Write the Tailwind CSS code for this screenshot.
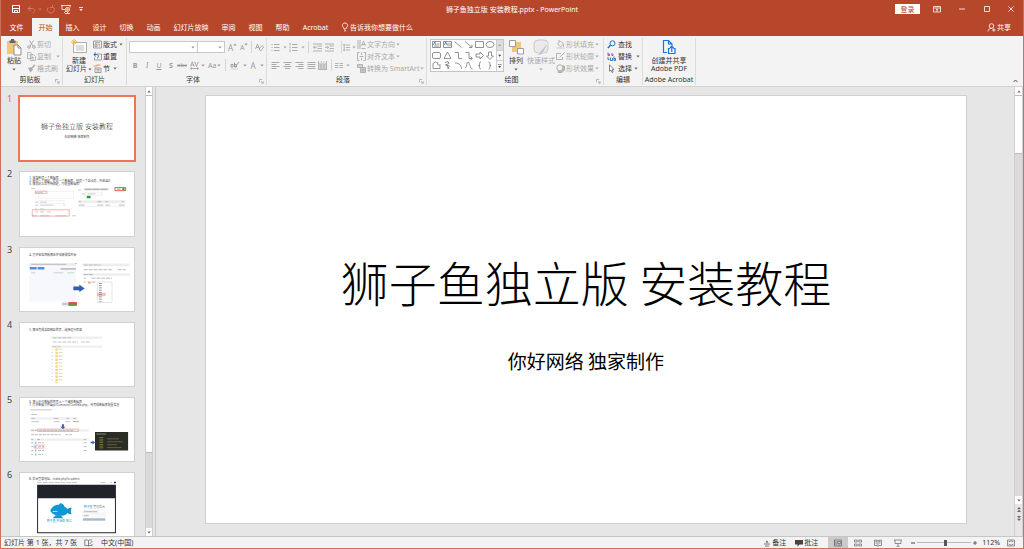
<!DOCTYPE html>
<html>
<head>
<meta charset="utf-8">
<title>狮子鱼独立版 安装教程.pptx - PowerPoint</title>
<script src="https://cdn.jsdelivr.net/npm/@tailwindcss/browser@4"></script>
</head>
<body class="h-screen overflow-hidden flex flex-col font-['Noto_Sans','Noto_Sans_CJK_SC',sans-serif] text-[7px] leading-[9px] text-[#333] bg-[#e6e6e6] border border-t-0 border-[#d0705c]">

<svg class="hidden">
  <symbol id="car" viewBox="0 0 4 3"><path d="M.3.5h3.4L2 2.5z" fill="currentColor"/></symbol>
  <symbol id="launch" viewBox="0 0 6 6"><path d="M.5 4V.5H4M2.500 2.500l2.500 2.500M5 2.800V5H2.800" fill="none" stroke="currentColor" stroke-width=".7"/></symbol>
</svg>

<header class="bg-[#b7472a] text-white shrink-0">
  <div class="h-[18px] grid grid-cols-[1fr_auto_1fr] items-center">
    <div class="flex items-center pl-[10px]">
      <button aria-label="保存" class="w-[10px]"><svg class="size-[10px] block" viewBox="0 0 10 10" fill="none" stroke="#fff"><path d="M1.500 1.500h7v7h-7z"/><path d="M1.500 4.500h7M3.500 8.500V6.500h3v2"/></svg></button>
      <button aria-label="撤消" class="ml-[6px] text-[#d07a64] flex items-center gap-[2px]"><svg class="size-[9px]" viewBox="0 0 9 9" fill="none" stroke="currentColor"><path d="M3.500 1 1 3.500 3.500 6M1 3.500h4.500c3 0 3 4 0 4.500"/></svg><svg class="w-1 h-[3px]"><use href="#car"/></svg></button>
      <button aria-label="恢复" class="ml-[4px] text-[#d07a64]"><svg class="size-[9px] block" viewBox="0 0 9 9" fill="none" stroke="currentColor"><path d="M6.500 1.500A3.500 3.500 0 1 1 2 2.500M6.500 0v2.500H4"/></svg></button>
      <button aria-label="从头开始" class="ml-[6px]"><svg class="size-[10px] block" viewBox="0 0 10 10" fill="none" stroke="#fff" stroke-width=".8"><path d="M0 1.500h10M1 1.500v4h3M9 1.500v2M3 9l2-2"/><circle cx="6.500" cy="5.500" r="2.100"/><path d="M6 4.500v2l1.500-1zM4 9.500h5M6.500 8v1.500"/></svg></button>
      <button aria-label="自定义快速访问工具栏" class="ml-[8px]"><svg class="w-1 h-[5px] block" viewBox="0 0 4 5"><path d="M0 .5h4" stroke="#fff" stroke-width=".8"/><path d="M.3 2h3.400L2 4z" fill="#fff"/></svg></button>
    </div>
    <h1>狮子鱼独立版 安装教程.pptx - PowerPoint</h1>
    <div class="flex items-center justify-end pr-[7px]">
      <button class="bg-white text-[#b7472a] w-[25px] h-[10px] mr-[12px]">登录</button>
      <button aria-label="功能区显示选项" class="w-[10px] mr-[15px]"><svg class="size-[10px] block" viewBox="0 0 10 10" fill="none" stroke="#fff" stroke-width=".8"><path d="M1.500 2.500h7v5.500h-7zM1.500 4h7M5 8V5M3.800 6 5 4.900 6.200 6"/></svg></button>
      <button aria-label="最小化" class="w-[10px] mr-[15px]"><svg class="size-[10px] block" viewBox="0 0 10 10"><path d="M2 5h6" stroke="#fff" stroke-width=".8"/></svg></button>
      <button aria-label="最大化" class="w-[10px] mr-[14px]"><svg class="size-[10px] block" viewBox="0 0 10 10"><path d="M2.500 2.500h5v5h-5z" fill="none" stroke="#fff" stroke-width=".8"/></svg></button>
      <button aria-label="关闭" class="w-[10px]"><svg class="size-[10px] block" viewBox="0 0 10 10"><path d="m2.500 2.500 5 5m0-5-5 5" stroke="#fff" stroke-width=".8"/></svg></button>
    </div>
  </div>
  <nav class="h-[18px] flex items-stretch">
    <button class="w-[31px]">文件</button>
    <button class="w-[27px] bg-[#f3f3f3] text-[#b7472a]">开始</button>
    <button class="w-[27px]">插入</button>
    <button class="w-[27px]">设计</button>
    <button class="w-[27px]">切换</button>
    <button class="w-[27px]">动画</button>
    <button class="w-[48px]">幻灯片放映</button>
    <button class="w-[27px]">审阅</button>
    <button class="w-[27px]">视图</button>
    <button class="w-[27px]">帮助</button>
    <button class="w-[39px]">Acrobat</button>
    <button class="ml-[6px] flex items-center gap-[1px]"><svg class="w-2 h-[10px]" viewBox="0 0 8 10" fill="none" stroke="#fff" stroke-width=".8"><path d="M3 7V6C.5 4.500 1 1 4 1s3.500 3.500 1 5v1zM3 8.800h2"/></svg>告诉我你想要做什么</button>
    <button class="ml-auto mr-3 flex items-center gap-[1px]"><svg class="size-[9px]" viewBox="0 0 9 9" fill="none" stroke="#fff" stroke-width=".8"><circle cx="4.500" cy="3" r="2.300"/><path d="M1 8.500C1 6.500 2.500 5.300 4.500 5.300M5 7h3.500M6.800 5.300v3.400"/></svg>共享</button>
  </nav>
</header>

<section aria-label="功能区" class="h-[51px] shrink-0 bg-[#f3f3f3] border-b border-[#d2d2d2] flex pt-[2px] pb-px">

  <div class="w-[62px] border-r border-[#dcdcdc] flex flex-col">
    <div class="h-9 flex pl-[5px]">
      <button class="w-[16px] flex flex-col items-center"><svg class="w-4 h-[18px]" viewBox="0 0 16 18"><path d="M1 3h11v13H1z" fill="#f0c878"/><path d="M3.500 2.500H5V1h3v1.500h1.500V5h-6z" fill="#666"/><path d="M8 7h4l3 3v7H8z" fill="#fff" stroke="#777" stroke-width=".8"/><path d="M12 7v3h3" fill="none" stroke="#777" stroke-width=".8"/></svg>粘贴<svg class="w-1 h-[3px] mt-[3px] text-[#666]"><use href="#car"/></svg></button>
      <div class="ml-[5px] text-[#aaa] flex flex-col">
        <button class="h-3 flex items-center gap-[1px]"><svg class="size-[9px]" viewBox="0 0 9 9" fill="none" stroke="currentColor"><path d="M2.500.5 6 6M6.500.5 3 6"/><circle cx="2" cy="7" r="1.300"/><circle cx="7" cy="7" r="1.300"/></svg>剪切</button>
        <button class="h-3 flex items-center gap-[1px]"><svg class="size-[9px]" viewBox="0 0 9 9" fill="#f3f3f3" stroke="currentColor" stroke-width=".8"><path d="M.5.5h3l1.500 1.500v4.500H.5zM3.500 2.500h3L8.500 4.500v4h-5zM5 5.500h2M5 7h2M1.800 3h1"/></svg>复制<svg class="w-1 h-[3px] ml-1"><use href="#car"/></svg></button>
        <button class="h-3 flex items-center gap-[1px]"><svg class="size-[9px]" viewBox="0 0 9 9"><path d="M1 4 4 3l2 2.500L3.500 8.500z" fill="currentColor"/><path d="M5 4 8 .8" stroke="currentColor" stroke-width="1.500"/></svg>格式刷</button>
      </div>
    </div>
    <div class="flex-1 flex items-center"><span class="flex-1 text-center pl-[4px]">剪贴板</span><svg class="size-[5px] mr-[2px] mt-1 text-[#888]"><use href="#launch"/></svg></div>
  </div>

  <div class="w-[64px] border-r border-[#dcdcdc] flex flex-col">
    <div class="h-9 flex pl-[3px]">
      <button class="w-[26px] flex flex-col items-center"><svg class="w-[18px] h-[18px] shrink-0" viewBox="0 0 18 18"><path d="M3.500 4.500h13v10h-13z" fill="#fff" stroke="#999" stroke-width=".8"/><path d="M6 8h8M6 10h8M6 12h8" stroke="#aaa" stroke-width=".8"/><path d="M4 1v6M1 4h6M2 2l4 4M6 2 2 6" stroke="#f0b94f" stroke-width=".9"/></svg><span>新建</span><span class="flex items-center gap-[1px] leading-[8px] whitespace-nowrap">幻灯片<svg class="w-1 h-[3px] text-[#666]"><use href="#car"/></svg></span></button>
      <div class="flex flex-col ml-px">
        <button class="h-3 flex items-center gap-[1px]"><svg class="size-[9px]" viewBox="0 0 9 9" fill="none" stroke="#888" stroke-width=".8"><path d="M.5 1h8v7h-8zM2 2.700h5M2 4h2v2.500H2zM5.500 4.500H7M5.500 6H7"/></svg>版式<svg class="w-1 h-[3px] ml-px text-[#666]"><use href="#car"/></svg></button>
        <button class="h-3 flex items-center gap-[1px]"><svg class="size-[9px]" viewBox="0 0 9 9" fill="none"><path d="M3.500 2h5v6h-7V5.500" stroke="#888" stroke-width=".8"/><path d="M3 .5.800 2.500 3 4.500M1 2.500h2.500C6 2.500 6 6 4 6" stroke="#2b6cb8"/></svg>重置</button>
        <button class="h-3 flex items-center gap-[1px]"><svg class="size-[9px]" viewBox="0 0 9 9" fill="none"><path d="M.5 2h3l1-1h3" stroke="#e8935f" stroke-width="1.200"/><path d="M2 4h6v4.500H2zM3.500 5.500h3M3.500 7h3" stroke="#888" stroke-width=".8"/></svg>节<svg class="w-1 h-[3px] ml-[2px] text-[#666]"><use href="#car"/></svg></button>
      </div>
    </div>
    <div class="flex-1 flex items-center justify-center">幻灯片</div>
  </div>

  <div class="w-[140px] border-r border-[#dcdcdc] flex flex-col text-[#999]">
    <div class="h-[18px] flex items-center pl-[2px]">
      <div class="relative w-[69px]"><select aria-label="字体" class="appearance-none block w-full h-3 bg-white border border-[#c8c8c8]"></select><svg class="absolute right-[3px] top-[5px] w-1 h-[3px]"><use href="#car"/></svg></div>
      <div class="relative w-[27px]"><select aria-label="字号" class="appearance-none block w-full h-3 bg-white border border-l-0 border-[#c8c8c8]"></select><svg class="absolute right-[3px] top-[5px] w-1 h-[3px]"><use href="#car"/></svg></div>
      <button class="ml-[3px] w-[9px] text-[8px] flex">A<svg class="w-1 h-[3px]" viewBox="0 0 4 3"><path d="M.3 2.500h3.400L2 .5z" fill="currentColor"/></svg></button>
      <button class="ml-[3px] w-[9px] flex">A<svg class="w-1 h-[3px]"><use href="#car"/></svg></button>
      <i class="ml-[2px] h-3 border-l border-[#d4d4d4]"></i>
      <button aria-label="清除所有格式" class="ml-[3px]"><svg class="size-[9px] block" viewBox="0 0 9 9" fill="none" stroke="currentColor" stroke-width=".8"><path d="M.5 6 2.500 1l2 5M1.200 4.500h2.600M4 6l3-3.500 1.700 1.500-3 4z"/></svg></button>
    </div>
    <div class="h-[18px] flex items-center pl-[5px]">
      <button class="w-[6px] font-bold">B</button>
      <button class="w-[6px] ml-[6px] italic font-['Liberation_Serif',serif] text-[8px]">I</button>
      <button class="w-[6px] ml-[6px] underline">U</button>
      <button class="w-[6px] ml-[6px] font-bold">S</button>
      <button class="w-[10px] ml-[3px] line-through text-[6px]">abc</button>
      <button aria-label="字符间距" class="ml-[3px] flex items-center gap-[2px]"><svg class="w-[9px] h-[9px]" viewBox="0 0 9 9" fill="none" stroke="currentColor" stroke-width=".8"><path d="M.5 5.500 2.300.8l1.800 4.700M1.200 4h2.300M4.800.8l1.700 4.700L8.300.8M.5 7.500h8M2 6.500l-1.300 1L2 8.500M7 6.500l1.300 1L7 8.500"/></svg><svg class="w-1 h-[3px]"><use href="#car"/></svg></button>
      <button class="ml-[3px] flex items-center gap-[1px]">Aa<svg class="w-1 h-[3px]"><use href="#car"/></svg></button>
      <i class="ml-[4px] h-3 border-l border-[#d4d4d4]"></i>
      <button aria-label="文本突出显示颜色" class="ml-[4px] flex items-center gap-[3px]"><svg class="w-[10px] h-[9px]" viewBox="0 0 10 9" fill="none" stroke="currentColor" stroke-width=".9"><path d="M1 3.500h2v2.500H1zM4.500 1.500V6h2V3.500h-2M5 6l4-5"/><path d="M1 8h7" stroke="#e3dbe6" stroke-width="1.500"/></svg><svg class="w-1 h-[3px]"><use href="#car"/></svg></button>
      <button class="ml-[3px] flex items-center gap-[4px] text-[8px]">A<svg class="w-1 h-[3px]"><use href="#car"/></svg></button>
    </div>
    <div class="flex-1 flex items-center text-[#333]"><span class="flex-1 text-center">字体</span><svg class="size-[5px] mr-[2px] mt-1 text-[#888]"><use href="#launch"/></svg></div>
  </div>

  <div class="w-[160px] border-r border-[#dcdcdc] flex flex-col text-[#aaa]">
    <div class="h-9 flex pl-[4px]">
      <div class="w-[86px]">
        <div class="h-[18px] flex items-center">
          <button aria-label="项目符号" class="flex items-center gap-[3px]"><svg class="size-[9px]" viewBox="0 0 9 9" stroke="currentColor"><path d="M3 1.500h5.500M3 4.500h5.500M3 7.500h5.500M.5 1.500h1M.5 4.500h1M.5 7.500h1"/></svg><svg class="w-1 h-[3px]"><use href="#car"/></svg></button>
          <button aria-label="编号" class="ml-[2px] flex items-center gap-[3px]"><svg class="size-[9px]" viewBox="0 0 9 9" stroke="currentColor"><path d="M3 1.500h5.500M3 4.500h5.500M3 7.500h5.500M1 0v2.500M1 3.500v2M1 6.500V9"/></svg><svg class="w-1 h-[3px]"><use href="#car"/></svg></button>
          <i class="ml-[3px] h-3 border-l border-[#d4d4d4]"></i>
          <button aria-label="降低列表级别" class="ml-[4px]"><svg class="size-[9px] block" viewBox="0 0 9 9" fill="none" stroke="currentColor" stroke-width=".9"><path d="M0 1h9M4.500 3h4.500M4.500 5.500h4.500M0 8h9M4 4.300H.5M2 2.800.5 4.300 2 5.800"/></svg></button>
          <button aria-label="提高列表级别" class="ml-[3px]"><svg class="size-[9px] block" viewBox="0 0 9 9" fill="none" stroke="currentColor" stroke-width=".9"><path d="M0 1h9M4.500 3h4.500M4.500 5.500h4.500M0 8h9M0 4.300h3.500M2 2.800l1.500 1.500L2 5.800"/></svg></button>
          <i class="ml-[7px] h-3 border-l border-[#d4d4d4]"></i>
          <button aria-label="行距" class="ml-[1px] flex items-center gap-[2px]"><svg class="w-[7px] h-[9px]" viewBox="0 0 7 9" fill="none" stroke="currentColor" stroke-width=".9"><path d="M3 2h4M3 4.500h4M3 7h4M1.200 1v7M0 2.300 1.200 1l1.200 1.300M0 6.700 1.200 8l1.200-1.300"/></svg><svg class="w-1 h-[3px]"><use href="#car"/></svg></button>
        </div>
        <div class="h-[18px] flex items-center">
          <button aria-label="左对齐"><svg class="size-[9px] block" viewBox="0 0 9 9" stroke="currentColor"><path d="M.5 1.500h8M.5 3.500h5M.5 5.500h8M.5 7.500h5"/></svg></button>
          <button aria-label="居中" class="ml-[3px]"><svg class="size-[9px] block" viewBox="0 0 9 9" stroke="currentColor"><path d="M.5 1.500h8M2 3.500h5M.5 5.500h8M2 7.500h5"/></svg></button>
          <button aria-label="右对齐" class="ml-[3px]"><svg class="size-[9px] block" viewBox="0 0 9 9" stroke="currentColor"><path d="M.5 1.500h8M3.500 3.500h5M.5 5.500h8M3.500 7.500h5"/></svg></button>
          <button aria-label="两端对齐" class="ml-[3px]"><svg class="size-[9px] block" viewBox="0 0 9 9" stroke="currentColor"><path d="M.5 1.500h8M.5 3.500h8M.5 5.500h8M.5 7.500h8"/></svg></button>
          <button aria-label="分散对齐" class="ml-[2px]"><svg class="size-[9px] block" viewBox="0 0 9 9" stroke="currentColor"><path d="M.5 0v9M8.500 0v9M2.500 1h1.500M5 1h1.500M1 3h7M1 5h7M1 7h7M1 8.500h7M3 3v5M6 3v5" stroke-width=".9"/></svg></button>
          <i class="ml-[4px] h-3 border-l border-[#d4d4d4]"></i>
          <button aria-label="分栏" class="ml-[3px] flex items-center gap-[3px]"><svg class="w-[8px] h-[9px]" viewBox="0 0 8 9" stroke="currentColor"><path d="M0 2.500h3.400M0 4.500h3.400M0 6.500h3.400M4.600 2.500H8M4.600 4.500H8M4.600 6.500H8" stroke-width=".9"/></svg><svg class="w-1 h-[3px]"><use href="#car"/></svg></button>
        </div>
      </div>
      <div class="flex flex-col whitespace-nowrap">
        <button class="h-3 flex items-center gap-[1px]"><svg class="size-[9px]" viewBox="0 0 9 9" fill="none" stroke="currentColor" stroke-width=".9"><path d="M1 0v9M3 0v9M4.500 6 6.500 1l2 5M5 4.500h3M4.500 8.500h4"/></svg>文字方向<svg class="w-1 h-[3px]"><use href="#car"/></svg></button>
        <button class="h-3 flex items-center gap-[1px]"><svg class="size-[9px]" viewBox="0 0 9 9" fill="none" stroke="currentColor" stroke-width=".9"><path d="M2.500.5h-2v8h2M6.500.5h2v8h-2M2.500 4.500h4M4.500.5v2.500M4.500 6v2.500"/></svg>对齐文本<svg class="w-1 h-[3px]"><use href="#car"/></svg></button>
        <button class="h-3 flex items-center gap-[1px]"><svg class="size-[9px]" viewBox="0 0 9 9" fill="none" stroke="currentColor" stroke-width=".9"><path d="M.5.500h5v3h-5zM.5 2h5"/><path d="M3.500 3.500h5v5h-5z" fill="#cfc8d2"/><path d="M5 5.500h2.500M5 7h2.500"/></svg>转换为 SmartArt<svg class="w-1 h-[3px]"><use href="#car"/></svg></button>
      </div>
    </div>
    <div class="flex-1 flex items-center text-[#333]"><span class="flex-1 text-center">段落</span><svg class="size-[5px] mr-[2px] mt-1 text-[#888]"><use href="#launch"/></svg></div>
  </div>

  <div class="w-[177px] border-r border-[#dcdcdc] flex flex-col">
    <div class="h-9 flex pl-[3px]">
      <button aria-label="形状" class="w-[74px] h-[33px] mt-[1px] border border-[#c4c4c4] bg-white">
        <svg class="w-[72px] h-[31px] block" viewBox="0 0 72 31" fill="none" stroke="#777" stroke-width=".8">
          <path d="M65.500 0h6.500v31h-6.500z" fill="#f8f8f8" stroke="none"/><path d="M65.500 0h6.500v10h-6.500z" fill="#ddd" stroke="none"/><path d="M65.500 0v31M65.500 10.500H72M65.500 20.500H72" stroke="#c4c4c4"/>
          <path d="M1.500 1.500h8v6h-8zM12.500 1.500h8v6h-8zM6 4h2.500M3 6h5.500M17 3v3.500M19 3v3.500"/><path d="m2.500 5 1.200-3L5 5M13.500 5l1.200-3L16 5" stroke="#2b6cb8"/>
          <path d="m23.500 1.500 7 6M34 1.500l7 6M41 4.800v2.700h-3M44.500 1.500h8v6h-8z"/><ellipse cx="59" cy="4.500" rx="4" ry="3"/>
          <rect x="1.500" y="12.500" width="8" height="6" rx="1.500"/><path d="m16.500 12 3.500 6.500h-7zM24 12.500h3.500v6H31M34.500 12.500h3.500v6h3M39.500 16.500l2 2-2 1.500M45 14h4v-2l3.500 3.500L49 19v-2h-4zM57.500 12h3v4h2L59 19.500 55.500 16h2z"/>
          <path d="M2 28.500v-5l2.500-1.500 2.500 1c-1.500 2 1.500 3 2 1.500v4zM14 22.500l3-1 1 2-3.500 1.500 4 1-2 2.500M15 24l3 5M24 23c4 0 6.500 2 6.500 6M34 28c2 0 1.500-6 3-6s2 7 4.500 7M50 22c-1.500 0-1.500.5-1.500 3.500h-1 1c0 3 0 3.500 1.500 3.500M57.500 22c1.500 0 1.500.5 1.500 3.500h1-1c0 3 0 3.500-1.500 3.500"/>
          <path d="m67.200 6 1.500-2 1.500 2z" fill="#aaa" stroke="none"/><path d="m67.200 14.800 1.500 2 1.500-2zM67.200 26l1.500 2 1.500-2z" fill="#444" stroke="none"/><path d="M67 24.500h3.500"/>
        </svg>
      </button>
      <button class="ml-1 w-[16px] flex flex-col items-center"><svg class="w-[15px] h-[18px] shrink-0" viewBox="0 0 15 18"><path d="M5 4h7v8H5z" fill="#f0c878"/><path d="M3 8h6.500v6H3z" fill="#f0c878"/><path d="M.5 2.500h6v6h-6zM8.500 10.500h6v5.500h-6z" fill="#fff" stroke="#888" stroke-width=".8"/></svg>排列<svg class="w-1 h-[3px] mt-[3px] text-[#666]"><use href="#car"/></svg></button>
      <button class="ml-[3px] w-[28px] flex flex-col items-center text-[#aaa]"><svg class="w-[17px] h-[18px] shrink-0" viewBox="0 0 17 18"><rect x="1" y="2" width="14" height="13" rx="4" fill="#ece8ee" stroke="#c0c0c0" stroke-width=".8"/><path d="m16.500 3-7 8-5 6c3 .500 6-1 6.500-4z" fill="#c4c0c6" stroke="#f3f3f3" stroke-width=".6"/></svg>快速样式<svg class="w-1 h-[3px] mt-[3px]"><use href="#car"/></svg></button>
      <div class="ml-px flex flex-col text-[#aaa] whitespace-nowrap">
        <button class="h-3 flex items-center gap-[1px]"><svg class="size-[9px]" viewBox="0 0 9 9" fill="none" stroke="currentColor" stroke-width=".9"><path d="m1.500 4 3-3 3 3-3 2.500zM3 2V0M7.500 4.500v2"/><path d="M.5 8h8" stroke="#d8d2db" stroke-width="1.500"/></svg>形状填充<svg class="w-1 h-[3px]"><use href="#car"/></svg></button>
        <button class="h-3 flex items-center gap-[1px]"><svg class="size-[9px]" viewBox="0 0 9 9" fill="none" stroke="currentColor" stroke-width=".9"><path d="M5 1.500H.500v6h6V5M3.500 5.500 8.500.5"/></svg>形状轮廓<svg class="w-1 h-[3px]"><use href="#car"/></svg></button>
        <button class="h-3 flex items-center gap-[1px]"><svg class="size-[9px]" viewBox="0 0 9 9" stroke="currentColor" stroke-width=".9"><path d="M3 2h5.500v4L6 8.500H2z" fill="#bbb"/><circle cx="3.800" cy="3.800" r="3" fill="#f3f3f3"/></svg>形状效果<svg class="w-1 h-[3px]"><use href="#car"/></svg></button>
      </div>
    </div>
    <div class="flex-1 flex items-center"><span class="flex-1 text-center">绘图</span><svg class="size-[5px] mr-[2px] mt-1 text-[#888]"><use href="#launch"/></svg></div>
  </div>

  <div class="w-[39px] border-r border-[#dcdcdc] flex flex-col">
    <div class="h-9 flex flex-col pl-[3px]">
      <button class="h-3 flex items-center gap-[2px]"><svg class="size-[9px]" viewBox="0 0 9 9" fill="none" stroke="#2b6cb8"><circle cx="5.500" cy="3.300" r="2.500"/><path d="M3.500 5.200.8 8" stroke-width="1.500"/></svg>查找</button>
      <button class="h-3 flex items-center gap-[2px]"><svg class="size-[9px]" viewBox="0 0 9 9" fill="none" stroke-width=".9"><path d="M1 .5v3h1.500V2H1M4 2h2v1.500H4.500" stroke="#8a4fa8"/><path d="M3.500 5.500v3h2V6M7 4.500v4h1.500V6.500H7M1 5v2.500h1.500" stroke="#2b6cb8"/></svg>替换<svg class="w-1 h-[3px] ml-[2px] text-[#666]"><use href="#car"/></svg></button>
      <button class="h-3 flex items-center gap-[2px]"><svg class="size-[9px]" viewBox="0 0 9 9" fill="#fff" stroke="#666" stroke-width=".8"><path d="M2.500.8v6.500l1.500-1.300 1 2.500 1.200-.5-1-2.400H7z"/></svg>选择<svg class="w-1 h-[3px] text-[#666]"><use href="#car"/></svg></button>
    </div>
    <div class="flex-1 flex items-center justify-center">编辑</div>
  </div>

  <div class="w-[53px] border-r border-[#dcdcdc] flex flex-col">
    <button class="h-9 flex flex-col items-center"><svg class="w-[16px] h-[18px] shrink-0" viewBox="0 0 16 18" fill="none" stroke="#1473e6" stroke-width="1.200"><path d="M6 14.500H2.500v-12h5l3.500 3.500v1.500M7.500 2.500V6H11"/><path d="M9 10.500H7.500v5h6.500v-5h-1.500M10.800 14V8.500M9 10l1.800-1.800L12.600 10"/></svg><span>创建并共享</span><span class="leading-[8px]">Adobe PDF</span></button>
    <div class="flex-1 flex items-center justify-center whitespace-nowrap">Adobe Acrobat</div>
  </div>
  <button aria-label="折叠功能区" class="ml-auto mr-[5px] self-end"><svg class="w-[5px] h-[7px] block" viewBox="0 0 5 7"><path d="m.5 4 2-2 2 2" fill="none" stroke="#555"/></svg></button>
</section>

<main class="flex-1 min-h-0 flex">
  <aside aria-label="幻灯片缩略图" class="w-[144px] shrink-0 overflow-hidden pt-[9px] pl-[6px] flex flex-col gap-[10px] text-[9px] leading-[6px] text-[#444]">
    <div class="flex"><span class="w-[12px] text-[#e8694a]">1</span>
      <svg class="w-[116px] aspect-video bg-white outline-2 outline-[#ee7455] outline-offset-[-1px]" viewBox="0 0 116 65"><text x="58" y="33" font-size="7" font-weight="300" text-anchor="middle" fill="#222">狮子鱼独立版 安装教程</text><text x="58" y="42" font-size="3" text-anchor="middle" fill="#444">你好网络 独家制作</text></svg></div>
    <div class="flex"><span class="w-[12px]">2</span>
      <svg class="w-[116px] aspect-video bg-white border border-[#d0d0d0]" viewBox="0 0 116 65" fill="none">
        <g font-size="3" fill="#444"><text x="9" y="7.500">1. 宝塔新建一个数据库</text><text x="9" y="10.500">2. 新建一个网站，建议一个数据库，创建一个站点后，开启443</text><text x="9" y="13.500">3. 解析好之后等待绑定，再配置数据库!</text></g>
        <path d="M11 17h4M59 18.500h3M15 21.300h8M15 31h3M20 31h7M15 34h3M20 34h14M44 34h1.500M15 38h2M20 38h4M15 41h3M20 41h4M27 41h4M12 45h5M20 45h10M36 45h11M53 45h4M63 22.500h3M69 22.500h8" stroke="#bbb" stroke-width=".8"/>
        <path d="M65 16.500h26v2.500H65z" fill="#e4e4e4"/><path d="M66 17.800h24" stroke="#999" stroke-width=".8" stroke-dasharray="7 1"/>
        <path d="M18.500 20h36v7h-36zM18.500 29.500h26v3h-26zM66 20.800h18v3H66z" stroke="#e2e2e2" stroke-width=".5"/>
        <path d="M15 19.700h12v2.300H15zM12 38.800h38v6.500H12z" stroke="#f09090" stroke-width=".7"/><path d="M97 16h11v3.200H97z" stroke="#e52c2c" stroke-width=".8"/><path d="M99 17.600h4" stroke="#999"/><path d="M104.500 16.700h2.500v2h-2.500z" fill="#25a83e"/>
        <path d="M68 24.500h4v2.500h-4z" fill="#1fa338"/><path d="M59 29h49v3H59z" fill="#eee"/><path d="M60 30.500h2M79 30.500h4M87 30.500h3M104 30.500h2M60 34h6M79 34h6M87 34h5M101 34h6" stroke="#aaa" stroke-width=".8"/><path d="M59 35.500h49" stroke="#ddd" stroke-width=".4"/>
      </svg></div>
    <div class="flex"><span class="w-[12px]">3</span>
      <svg class="w-[116px] aspect-video bg-white border border-[#d0d0d0]" viewBox="0 0 116 65" fill="none">
        <text x="9" y="8" font-size="3" fill="#444">4. 打开宝塔面板解压并安装微信开源</text>
        <path d="M9 19h48v36H9z" fill="#f7f8fe"/><path d="M9 15.500h48v3H9z" fill="#eee"/><path d="M11 16.800h36M56 16h2" stroke="#999" stroke-width=".6"/>
        <path d="M9.500 19.500h7v2.700h-7zM17.500 19.500h7v2.700h-7z" fill="#4a92e2"/><path d="M41 21.500h16" stroke="#bbb" stroke-width="1.600"/><path d="M11 25.500h4M34 25.500h10" stroke="#ccc"/><path d="M48 25.500h7" stroke="#b2dfb7"/>
        <path d="M63.500 16H112v2.800H63.500zM63.500 26H112v2.500H63.500z" fill="#eee"/><path d="M65 17.500h17M65 22.300h30M100 22.300h8M65 27.300h10M65 31h2M73 31h21M65 35h2M73 35h4" stroke="#999" stroke-width=".7" stroke-dasharray="4 1"/><path d="M69.500 34.500h2.500v2h-2.500z" fill="#f39c4e"/>
        <path d="M79 35h15v21H79z" fill="#fff" stroke="#ccc" stroke-width=".5"/><path d="M82 36v19" stroke="#777" stroke-width="3" stroke-dasharray=".8 1.500"/><path d="M79 46.500h8v2.500h-8z" fill="#e33" fill-opacity=".25" stroke="#e88" stroke-width=".5"/>
        <path d="M54.500 39.800h6V38l5 3.500-5 3.500v-1.800h-6z" fill="#2f5fae" stroke="#24498a" stroke-width=".4"/>
        <path d="M42.500 56h6v3h-6z" fill="#ccc"/><path d="M49.500 56h8v3h-8z" fill="#3fa648" stroke="#e33" stroke-width=".8"/>
      </svg></div>
    <div class="flex"><span class="w-[12px]">4</span>
      <svg class="w-[116px] aspect-video bg-white border border-[#d0d0d0]" viewBox="0 0 116 65" fill="none">
        <text x="9" y="8" font-size="3" fill="#444">5. 解压完成返回网站首页，选择运行目录</text>
        <path d="M31 14h53v2.500H31zM31 23h53v2.500H31z" fill="#f0f0f0"/><path d="M33 15.200h19M33 19.500h26M62 19.500h9M33 24.300h8" stroke="#aaa" stroke-width=".7" stroke-dasharray="4 1"/>
        <path d="M37 26v36" stroke="#f8dc7c" stroke-width="2.600" stroke-dasharray="2.500 1"/><path d="M41 26.500v35" stroke="#ccc" stroke-width="4" stroke-dasharray=".8 2.700"/><path d="M32.500 26.500v35" stroke="#ccc" stroke-width="1.500" stroke-dasharray=".8 2.700"/>
      </svg></div>
    <div class="flex"><span class="w-[12px]">5</span>
      <svg class="w-[116px] aspect-video bg-white border border-[#d0d0d0]" viewBox="0 0 116 65" fill="none">
        <g font-size="3" fill="#444"><text x="9" y="5.500">6. 把公众号数据的值写入一个属性数据库</text><text x="9" y="8.500">7. 打开数据文件App/Common/Conf/db.php，改写成数据库配置信息</text></g>
        <path d="M10 12.200h22M11 17h6M11 21h4M34 21h5M47 21h3M54 21h3M11 24.300h8M34 24.300h6M46 24.300h5" stroke="#aaa" stroke-width=".7"/><path d="M54 24.300h6" stroke="#7cc785"/><path d="M10 19.500h50v3H10z" fill="#999" fill-opacity=".12"/>
        <path d="M42.500 27h2v2.500H46l-2.500 2.500L41 29.500h1.500zM72 45h2V43.700l2.500 2-2.500 2v-1.300h-2z" fill="#2f5fae"/>
        <path d="M10 32h60v2.500H10zM10 41.500h60v2.500H10z" fill="#eee"/><path d="M11 33.200h6M19 33.200h35M11 37.700h30M46 37.700h8M11 42.700h2M17 42.700h4M65 42.700h2M11 46h2M18 46h6M11 50h2M18 50h6M11 54h2M18 54h6M11 58h2M18 58h5M65 46h4M65 50h4M65 54h4" stroke="#999" stroke-width=".7" stroke-dasharray="3 1"/>
        <path d="M17.500 31.900h42v2.500h-42zM14 48.500h10v3H14z" stroke="#e88" stroke-width=".6"/><path d="M15.500 45v15" stroke="#8fbce4" stroke-width="1.600" stroke-dasharray="2 2"/>
        <path d="M76.500 35h34v19H76.500z" fill="#2a2c26"/><path d="M78 37h10" stroke="#888"/><path d="M83 40v12" stroke="#85843b" stroke-width="4" stroke-dasharray=".8 1"/><path d="M89 42h12M89 45h16M89 48h10M89 51h15" stroke="#756f3c" stroke-width=".8"/>
      </svg></div>
    <div class="flex"><span class="w-[12px]">6</span>
      <svg class="w-[116px] aspect-video bg-white border border-[#d0d0d0]" viewBox="0 0 116 65" fill="none">
        <text x="9" y="7.500" font-size="3" fill="#444">8. 后台登录地址，index.php?s=admin</text>
        <path d="M17 9.800h41M82 9.800h6M92 9.800h2" stroke="#aaa" stroke-width=".7" stroke-dasharray="5 1"/><path d="M96 9h2v1.500h-2z" fill="#222"/>
        <path d="M17 12h81v50H17z" fill="#20232a"/><path d="M18 26h79v35H18z" fill="#fff"/>
        <path d="M30.500 39c1-4 4.500-6.500 9-6.500l1-1.500c3 0 4.500 2 4.500 3.500l3.500 2.500c1.500-1.500 3-1.500 4-1-1 2.500-1 4.500 0 6.500-2 0-3-.5-4-1.500-4 4.500-14 4-18-2z" fill="#0d97d5"/><path d="M33 39.500h5" stroke="#fff" stroke-width=".7"/><path d="M36 43.500 33 46.500h11l-3-3z" fill="#0d97d5"/>
        <text x="27" y="50.500" font-size="3" fill="#1598d4">狮子鱼 开源版 独立</text>
        <text x="65" y="36" font-size="3" fill="#1598d4">狮子鱼 <tspan fill="#777">管理后台</tspan></text>
        <path d="M64 38.500h23v2.500H64zM64 42.500h23V45H64z" stroke="#ddd" stroke-width=".4"/><path d="M65 39.800h2M67 39.800h12M65 43.800h2M67 43.800h3" stroke="#aaa" stroke-width=".9"/><path d="M64 46.500h23v2.500H64z" fill="#a9b9c5"/>
      </svg></div>
  </aside>

  <div aria-hidden="true" class="w-[8px] shrink-0 flex flex-col bg-[#dadada] border-x border-[#cfcfcf] text-[#666]">
    <div class="h-[9px] bg-white flex items-center justify-center border-b border-[#bbb]"><svg class="w-1 h-[3px] rotate-180"><use href="#car"/></svg></div>
    <div class="grow-[358] basis-0 bg-white border-b border-[#bbb]"></div>
    <div class="grow-[75] basis-0"></div>
    <div class="h-[8px] bg-white flex items-center justify-center"><svg class="w-1 h-[3px]"><use href="#car"/></svg></div>
  </div>
  <div class="w-[3px] shrink-0 border-r border-[#c8c8c8]"></div>

  <section aria-label="幻灯片编辑区" class="flex-1 pt-2 pl-[49px] pr-[47px]">
    <div class="aspect-video w-full bg-white border border-[#d0d0d0] text-black text-center flex flex-col items-center pt-[156px] font-['Noto_Sans_CJK_SC',sans-serif]">
      <h2 class="text-[48px] leading-[58px] font-light">狮子鱼独立版 安装教程</h2>
      <p class="mt-[39px] text-[19px] leading-[24px] font-normal">你好网络 独家制作</p>
    </div>
  </section>

  <div aria-hidden="true" class="w-[9px] shrink-0 flex flex-col bg-[#dadada] border-x border-[#cfcfcf] text-[#666]">
    <div class="h-[9px] bg-white flex items-center justify-center border-b border-[#bbb]"><svg class="w-1 h-[3px] rotate-180"><use href="#car"/></svg></div>
    <div class="grow-[57] basis-0 bg-white border-b border-[#bbb]"></div>
    <div class="grow-[345] basis-0"></div>
    <div class="h-[8px] bg-white flex items-center justify-center"><svg class="w-1 h-[3px]"><use href="#car"/></svg></div>
    <div class="h-[32px] bg-[#e6e6e6] flex flex-col items-center pt-[3px] gap-[4px]">
      <svg class="w-1 h-[5px]" viewBox="0 0 4 5" fill="currentColor"><path d="M0 2.300 2 0l2 2.300zM0 5l2-2.300L4 5z"/></svg>
      <svg class="w-1 h-[5px]" viewBox="0 0 4 5" fill="currentColor"><path d="M0 0 2 2.300 4 0zM0 2.700 2 5l2-2.300z"/></svg>
    </div>
  </div>
</main>

<footer class="h-[12px] shrink-0 bg-[#f3f3f3] border-t border-[#c6c6c6] flex items-center pl-[3px]">
  <span class="whitespace-nowrap">幻灯片 第 1 张，共 7 张</span>
  <button aria-label="拼写检查" class="ml-[7px]"><svg class="w-[9px] h-[8px] block" viewBox="0 0 9 8" fill="none" stroke="#666" stroke-width=".8"><path d="M4.500 7V1.500C3.500.8 2 .8.800 1v5.500c1.500-.3 2.700 0 3.700.5M4.500 1.500C5.500.8 7 .8 8 1M4.500 7c1-.5 2-.8 3.500-.5V5M5.500 5 8.500 2"/></svg></button>
  <button class="ml-[8px]">中文(中国)</button>
  <div class="ml-auto flex items-center h-full">
    <button class="flex items-center gap-[1px]"><svg class="w-2 h-2" viewBox="0 0 8 8" stroke="#555" stroke-width=".8"><path d="M1 5h6M2 7h4"/><path d="m2.500 3.500 1.500-2 1.500 2z" fill="#555" stroke="none"/></svg>备注</button>
    <button class="ml-[9px] flex items-center gap-[1px]"><svg class="w-2 h-2" viewBox="0 0 8 8"><path d="M0 1h8v4.500H4.500L2.500 7.800V5.500H0z" fill="#444"/></svg>批注</button>
    <button aria-label="普通视图" class="ml-[10px] w-[20px] h-full bg-[#cacaca] flex items-center justify-center"><svg class="w-2 h-2" viewBox="0 0 8 8" fill="none" stroke="#666" stroke-width=".7"><path d="M.5 1h7v6h-7zM.5 1v6M2 2.500v3.500M3.500 2.500h3v2h-3zM3.500 6h3"/></svg></button>
    <button aria-label="幻灯片浏览" class="w-[20px] flex justify-center"><svg class="w-2 h-2" viewBox="0 0 8 8" fill="none" stroke="#666" stroke-width=".7"><path d="M.5 1h2.700v2H.5zM4.800 1h2.700v2H4.800zM.5 5h2.700v2H.5zM4.800 5h2.700v2H4.800z"/></svg></button>
    <button aria-label="阅读视图" class="w-[20px] flex justify-center"><svg class="w-2 h-2" viewBox="0 0 8 8" fill="none" stroke="#666" stroke-width=".7"><path d="M4 7.500V1.500L.5 1v5.500h2.700zM4 1.500 7.500 1v5.500H4.800M1.500 2.500h1.500M1.500 4h1.500M5 2.500h1.500M5 4h1.500"/></svg></button>
    <button aria-label="幻灯片放映" class="w-[20px] flex justify-center"><svg class="w-2 h-2" viewBox="0 0 8 8" fill="none" stroke="#666" stroke-width=".7"><path d="M0 1h8M1 1v3.500h6V1M4 4.500V7M2.500 7.300h3"/></svg></button>
    <button aria-label="缩小" class="ml-[2px] w-[6px]"><svg class="w-[6px] h-[6px] block" viewBox="0 0 6 6"><path d="M1 3h4" stroke="#444"/></svg></button>
    <input type="range" aria-label="显示比例" min="0" max="100" value="52" class="appearance-none w-[54px] h-[7px] mx-[1px] bg-[linear-gradient(#bbb,#bbb)] bg-[length:100%_1px] bg-center bg-no-repeat [&::-webkit-slider-thumb]:appearance-none [&::-webkit-slider-thumb]:w-[3px] [&::-webkit-slider-thumb]:h-[6px] [&::-webkit-slider-thumb]:bg-[#555]">
    <button aria-label="放大" class="w-[6px]"><svg class="w-[6px] h-[6px] block" viewBox="0 0 6 6"><path d="M1 3h4M3 1v4" stroke="#444" stroke-width=".8"/></svg></button>
    <button class="ml-[4px]">112%</button>
    <button aria-label="使幻灯片适应当前窗口" class="ml-[7px] mr-[8px]"><svg class="w-2 h-2 block" viewBox="0 0 8 8" fill="none" stroke="#666" stroke-width=".7"><path d="M.5 1h7v6h-7zM2 3.200V2.500h1M5 2.500h1v.7M2 4.800v.7h1M5 5.500h1v-.7M4 1v2M4 5v2"/></svg></button>
  </div>
</footer>
</body>
</html>
